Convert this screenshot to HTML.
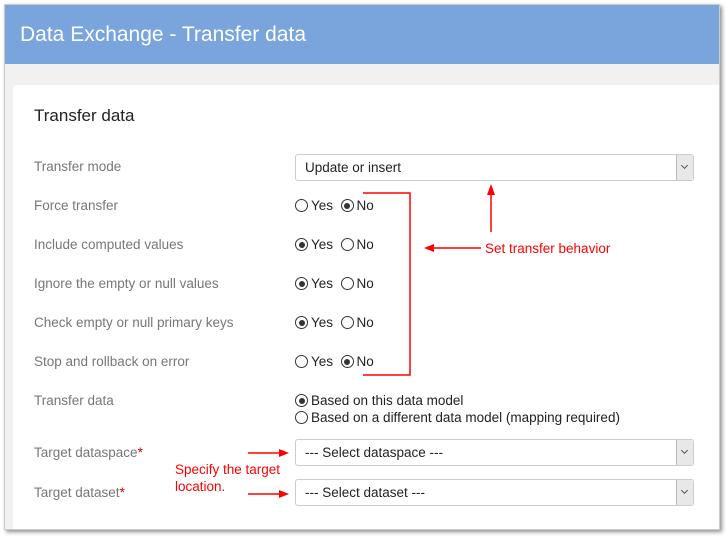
<!DOCTYPE html>
<html><head><meta charset="utf-8"><style>
body{margin:0;width:728px;height:538px;background:#fff;font-family:"Liberation Sans",sans-serif;position:relative;overflow:hidden}
.frame{position:absolute;left:4px;top:4px;width:716px;height:526px;background:#f1f1f1;box-shadow:2px 2px 4px rgba(0,0,0,.45);border:1px solid #ccc;box-sizing:border-box}
.hdr{position:absolute;left:5px;top:5px;width:714px;height:59px;background:#7aa5dc;color:#fff;font-size:21px;line-height:59px;padding-left:15px;box-sizing:border-box}
.card{position:absolute;left:13px;top:85px;width:706px;height:444px;background:#fff;border-radius:4px 0 0 0}
.t{position:absolute;white-space:nowrap}
.lbl{position:absolute;left:34px;color:#777;font-size:13.5px}
.sel{position:absolute;left:295px;width:399px;height:27px;border:1px solid #ccc;border-radius:3px;box-sizing:border-box;font-size:13.5px;color:#222;line-height:25px;padding-left:9px}
.sel .b{position:absolute;right:0;top:0;width:16px;height:25px;background:#e8e8e8;border-left:1px solid #bbb}
.sel .b::after{content:"";position:absolute;left:5px;top:8px;width:4px;height:4px;border-right:1px solid #555;border-bottom:1px solid #555;transform:rotate(45deg)}
.r{position:absolute;font-size:13.5px;color:#222;white-space:nowrap}
.c{display:inline-block;width:13px;height:13px;border:1px solid #333;border-radius:50%;box-sizing:border-box;vertical-align:-2px;margin-right:3px;position:relative}
.c.on::after{content:"";position:absolute;left:2.5px;top:2.5px;width:6px;height:6px;border-radius:50%;background:#333}
.red{color:#f00;font-size:13.5px;position:absolute}
</style></head><body>
<div class="frame"></div>
<div class="hdr">Data Exchange - Transfer data</div>
<div class="card"></div>
<div class="t" style="left:34px;top:106px;font-size:17px;color:#222">Transfer data</div>
<div class="lbl" style="top:159px">Transfer mode</div>
<div class="lbl" style="top:198px">Force transfer</div>
<div class="lbl" style="top:237px">Include computed values</div>
<div class="lbl" style="top:276px">Ignore the empty or null values</div>
<div class="lbl" style="top:315px">Check empty or null primary keys</div>
<div class="lbl" style="top:354px">Stop and rollback on error</div>
<div class="lbl" style="top:393px">Transfer data</div>
<div class="lbl" style="top:445px">Target dataspace<span style="color:#c00">*</span></div>
<div class="lbl" style="top:485px">Target dataset<span style="color:#c00">*</span></div>
<div class="sel" style="top:154px">Update or insert<div class="b"></div></div>
<div class="sel" style="top:439px">--- Select dataspace ---<div class="b"></div></div>
<div class="sel" style="top:479px">--- Select dataset ---<div class="b"></div></div>
<div class="r" style="left:295px;top:198px"><span class="c"></span>Yes&nbsp;&nbsp;<span class="c on"></span>No</div>
<div class="r" style="left:295px;top:237px"><span class="c on"></span>Yes&nbsp;&nbsp;<span class="c"></span>No</div>
<div class="r" style="left:295px;top:276px"><span class="c on"></span>Yes&nbsp;&nbsp;<span class="c"></span>No</div>
<div class="r" style="left:295px;top:315px"><span class="c on"></span>Yes&nbsp;&nbsp;<span class="c"></span>No</div>
<div class="r" style="left:295px;top:354px"><span class="c"></span>Yes&nbsp;&nbsp;<span class="c on"></span>No</div>
<div class="r" style="left:295px;top:393px"><span class="c on"></span>Based on this data model</div>
<div class="r" style="left:295px;top:410px"><span class="c"></span>Based on a different data model (mapping required)</div>
<svg style="position:absolute;left:0;top:0" width="728" height="538">
<g stroke="#f00" stroke-width="1.5" fill="none">
<path d="M363 193H410V375H363"/>
<path d="M481 248H432"/>
<path d="M491 232V193"/>
<path d="M248 453H280"/>
<path d="M248 494H280"/>
</g>
<g fill="#f00">
<path d="M424 248L434 244V252Z"/>
<path d="M491 184L487 195H495Z"/>
<path d="M289 453L279 449V457Z"/>
<path d="M289 494L279 490V498Z"/>
</g>
</svg>
<div class="red" style="left:485px;top:241px">Set transfer behavior</div>
<div class="red" style="left:175px;top:461px;line-height:17px">Specify the target<br>location.</div>
</body></html>
